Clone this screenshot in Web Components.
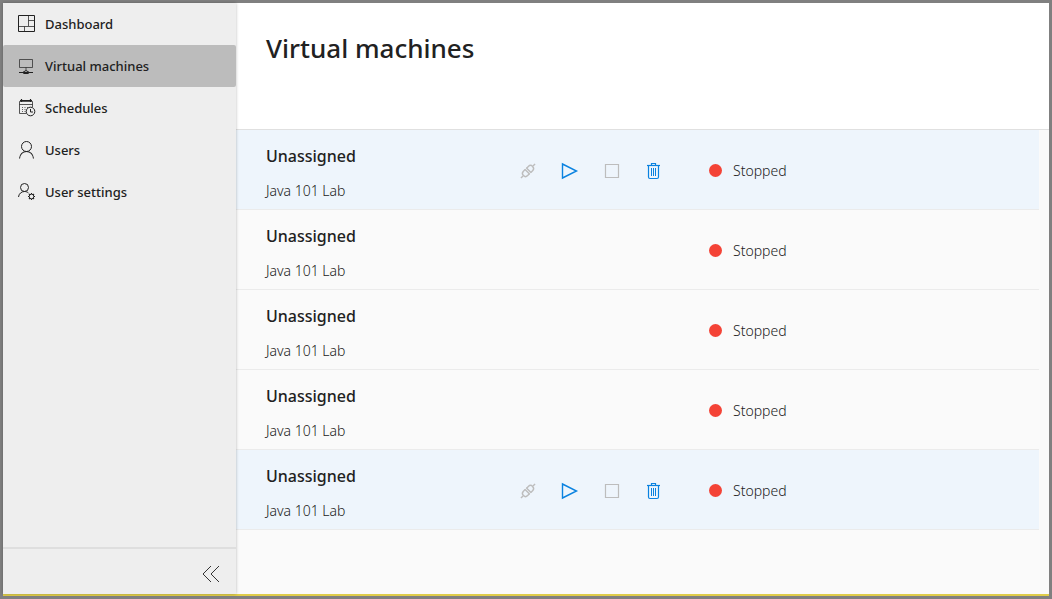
<!DOCTYPE html>
<html lang="en">
<head>
<meta charset="utf-8">
<title>Virtual machines</title>
<style>
  body { margin: 0; font-family: "Noto Sans", "Open Sans", sans-serif; color: #212121; }
</style>
</head>
<body>
<lab-app></lab-app>
<script>
const svg = (w, h, body) => `<svg width="${w}" height="${h}" viewBox="0 0 ${w} ${h}" fill="none" stroke="currentColor" aria-hidden="true">${body}</svg>`;

const icons = {
  dashboard: svg(18, 18, `<path d="M.5 .5h16v16H.5z"/><path d="M10.500 .5v10.500M.5 11.500h16M10.500 5.500H17M6.500 11.500V17" opacity=".75"/>`),
  machine: svg(18, 18, `<path d="M1.500 2.500h13v8h-13zM8 10.500v3" opacity=".7"/><path d="M1 15.500h14"/><path d="M4.500 15.500L8 13.500l3.500 2L10 16.500H6z"/>`),
  schedule: svg(18, 18, `<path d="M8 14.500H1.500v-12h13V8M1.500 5.500h13" opacity=".75"/><path d="M3.500 0v3M12.500 0v3M2 1.500h12" stroke-width="1.200"/><path d="M4 8.500h7M4 10.500h5M4 12.500h4" stroke-dasharray="1 1.500" opacity=".7"/><circle cx="12.500" cy="12.500" r="4.300"/><path d="M12.500 10v3H15"/>`),
  user: svg(18, 18, `<circle cx="8.500" cy="5.500" r="5"/><path d="M1.500 17.500C2 13.500 4.800 10.500 8.500 10.500s6.500 3 7 7" stroke-width="1.100"/>`),
  userSettings: svg(18, 18, `<circle cx="6.500" cy="4.500" r="4"/><path d="M.5 14C.8 10.700 3.500 8.500 6.500 8.500c1.600 0 3 .6 4 1.500"/><circle cx="13.500" cy="13.500" r="2.300"/><path d="M13.500 10v1M13.500 16v1M10 13.500h1M16 13.500h1M11 11l.8.8M15.200 15.200l.8.8M16 11l-.8.8M11.800 15.200l-.8.8" stroke-width="1.200"/>`),
  collapse: svg(18, 18, `<path d="M9 1L1 9l8 8M17 1L9 9l8 8"/>`),
  connect: svg(18, 18, `<g transform="rotate(-45 9 9)" stroke-width="1.400"><path d="M-1 9h3M16 9h3M8 5.500v7M10 5.500v7"/><path d="M8 6H5.500a3 3 0 0 0 0 6H8M10 6h2.500a3 3 0 0 1 0 6H10"/></g>`),
  start: svg(18, 18, `<path d="M1.500 2v14l14-7z" stroke-width="1.400"/>`),
  stop: svg(18, 18, `<path d="M2.500 2.500h13v13h-13z" stroke-width="1.200"/>`),
  remove: svg(18, 18, `<path d="M2 3.500h13" stroke-width="1.200"/><path d="M6.500 3V1.500h4V3M3.500 4v11q0 1.500 1.500 1.500h7q1.500 0 1.500-1.500V4" stroke-width="1.200"/><path d="M6.500 6v8M8.500 6v8M10.500 6v8"/>`)
};

customElements.define("app-icon", class extends HTMLElement {
  connectedCallback() {
    this.attachShadow({ mode: "open" }).innerHTML =
      `<style>:host{display:inline-flex;flex:none}svg{display:block;overflow:visible}</style>${icons[this.getAttribute("name")]}`;
  }
});

customElements.define("nav-item", class extends HTMLElement {
  connectedCallback() {
    this.attachShadow({ mode: "open" }).innerHTML = `<style>
      :host { display: block; }
      a { display: flex; align-items: center; gap: 9px; height: 42px; padding-left: 15px;
          color: #212121; text-decoration: none; font-size: 13px; font-weight: 500; border-radius: 2px; }
      :host([current]) a { background: #bcbcbc; }
    </style>
    <a href="#" ${this.hasAttribute("current") ? 'aria-current="page"' : ""}><app-icon name="${this.getAttribute("icon")}"></app-icon><span><slot></slot></span></a>`;
  }
});

customElements.define("side-nav", class extends HTMLElement {
  connectedCallback() {
    this.attachShadow({ mode: "open" }).innerHTML = `<style>
      :host { display: flex; flex-direction: column; background: #eee; box-shadow: 0 0 3px #0004; z-index: 1; }
      nav { flex: 1; }
      footer { display: flex; justify-content: flex-end; border-top: 2px solid #dedede; height: 45px; }
      button { display: flex; align-items: center; padding: 4px 16px 0; border: 0; background: none; color: #333; }
    </style>
    <nav aria-label="Main"><slot></slot></nav>
    <footer><button type="button" aria-label="Collapse menu"><app-icon name="collapse"></app-icon></button></footer>`;
  }
});

customElements.define("vm-actions", class extends HTMLElement {
  connectedCallback() {
    this.attachShadow({ mode: "open" }).innerHTML = `<style>
      :host { display: flex; }
      button { display: flex; align-items: center; justify-content: center; width: 42px; height: 42px;
               padding: 0; border: 0; background: none; color: #0a82e0; }
      button:disabled { color: #bdbdbd; }
    </style>
    <button type="button" aria-label="Connect" disabled><app-icon name="connect"></app-icon></button>
    <button type="button" aria-label="Start"><app-icon name="start"></app-icon></button>
    <button type="button" aria-label="Stop" disabled><app-icon name="stop"></app-icon></button>
    <button type="button" aria-label="Delete"><app-icon name="remove"></app-icon></button>`;
  }
});

customElements.define("vm-row", class extends HTMLElement {
  connectedCallback() {
    this.attachShadow({ mode: "open" }).innerHTML = `<style>
      :host { display: grid; grid-template-columns: 241px 168px 1fr; align-items: center; box-sizing: border-box;
              height: 80px; padding-left: 30px; border-bottom: 1px solid #ebebeb; }
      :host([active]) { background: #eef5fc; }
      h2 { margin: 0; font-size: 16px; line-height: 24px; font-weight: 500; }
      p { margin: 13px 0 0; font-size: 14px; line-height: 20px; font-weight: 300; }
      .info { padding-top: 5px; }
      .status { display: flex; align-items: center; gap: 11px; padding: 2px 0 0 34px; font-size: 14px; line-height: 20px; font-weight: 300; }
      .dot { width: 13px; height: 13px; border-radius: 50%; background: #f44336; }
      .actions { padding-top: 2px; }
    </style>
    <div class="info"><h2><slot></slot></h2><p><slot name="lab"></slot></p></div>
    <div class="actions">${this.hasAttribute("active") ? "<vm-actions></vm-actions>" : ""}</div>
    <div class="status"><span class="dot"></span><slot name="status"></slot></div>`;
  }
});

customElements.define("page-header", class extends HTMLElement {
  connectedCallback() {
    this.attachShadow({ mode: "open" }).innerHTML = `<style>
      :host { display: block; box-sizing: border-box; height: 127px; padding: 26px 30px; background: #fff; border-bottom: 1px solid #e0e0e0; }
      h1 { margin: 0; font-size: 26px; line-height: 38px; font-weight: 500; }
    </style><h1><slot></slot></h1>`;
  }
});

customElements.define("lab-app", class extends HTMLElement {
  connectedCallback() {
    const row = active => `<vm-row ${active ? "active" : ""}>Unassigned<span slot="lab">Java 101 Lab</span><span slot="status">Stopped</span></vm-row>`;
    this.attachShadow({ mode: "open" }).innerHTML = `<style>
      :host { display: grid; grid-template-columns: 233px 1fr; box-sizing: border-box; min-height: 100vh;
              border: 3px solid #808080; background: #fafafa; grid-template-rows: 1fr 2px; }
      .bar { grid-column: 1 / -1; background: #dfcd4a; }
      .list { padding-right: 10px; }
    </style>
    <side-nav>
      <nav-item icon="dashboard">Dashboard</nav-item>
      <nav-item icon="machine" current>Virtual machines</nav-item>
      <nav-item icon="schedule">Schedules</nav-item>
      <nav-item icon="user">Users</nav-item>
      <nav-item icon="userSettings">User settings</nav-item>
    </side-nav>
    <main>
      <page-header>Virtual machines</page-header>
      <div class="list">${[true, false, false, false, true].map(row).join("")}</div>
    </main>
    <div class="bar"></div>`;
  }
});
</script>
</body>
</html>
